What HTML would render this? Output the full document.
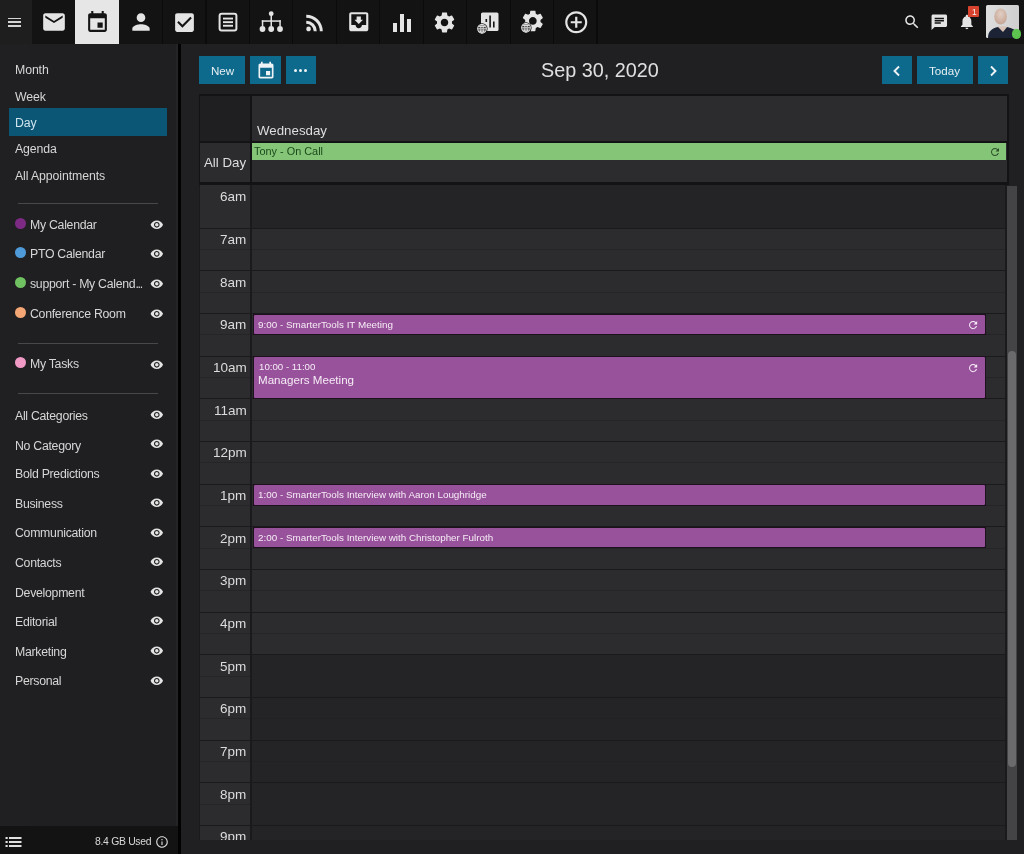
<!DOCTYPE html>
<html><head><meta charset="utf-8">
<style>
*{margin:0;padding:0;box-sizing:border-box;}
html,body{width:1024px;height:854px;overflow:hidden;background:#201f22;font-family:"Liberation Sans",sans-serif;color:#e2e2e2;position:relative;}
div{position:absolute;}
.t{white-space:nowrap;line-height:1;will-change:transform;}
.i{position:absolute;display:block;}
</style></head><body>

<div style="left:0;top:0;width:1024px;height:44px;background:#131313"></div>
<div style="left:0;top:0;width:32px;height:44px;background:#1e1e1f"></div>
<div style="left:8px;top:17.8px;width:13px;height:1.5px;background:#d4d4d4"></div>
<div style="left:8px;top:21.4px;width:13px;height:1.5px;background:#d4d4d4"></div>
<div style="left:8px;top:25.0px;width:13px;height:1.5px;background:#d4d4d4"></div>
<div style="left:75.05px;top:0;width:1.2px;height:44px;background:#0b0b0b"></div>
<div style="left:75.45px;top:0;width:43.45px;height:44px;background:#e6e6e6"></div>
<div style="left:161.95px;top:0;width:1.2px;height:44px;background:#0b0b0b"></div>
<div style="left:205.40px;top:0;width:1.2px;height:44px;background:#0b0b0b"></div>
<div style="left:248.85px;top:0;width:1.2px;height:44px;background:#0b0b0b"></div>
<div style="left:292.30px;top:0;width:1.2px;height:44px;background:#0b0b0b"></div>
<div style="left:335.75px;top:0;width:1.2px;height:44px;background:#0b0b0b"></div>
<div style="left:379.20px;top:0;width:1.2px;height:44px;background:#0b0b0b"></div>
<div style="left:422.65px;top:0;width:1.2px;height:44px;background:#0b0b0b"></div>
<div style="left:466.10px;top:0;width:1.2px;height:44px;background:#0b0b0b"></div>
<div style="left:509.55px;top:0;width:1.2px;height:44px;background:#0b0b0b"></div>
<div style="left:553.00px;top:0;width:1.2px;height:44px;background:#0b0b0b"></div>
<div style="left:596.45px;top:0;width:1.2px;height:44px;background:#0b0b0b"></div>
<svg class="i" style="left:40.73px;top:9.00px" width="26" height="26" viewBox="0 0 24 24"><path fill="#e4e4e4" d="M20 4H4c-1.1 0-1.99.9-1.99 2L2 18c0 1.1.9 2 2 2h16c1.1 0 2-.9 2-2V6c0-1.1-.9-2-2-2zm0 4l-8 5-8-5V6l8 5 8-5v2z"/></svg>
<svg class="i" style="left:84.68px;top:9.70px" width="25" height="25" viewBox="0 0 24 24"><path fill="#151515" d="M17 12h-5v5h5v-5zM16 1v2H8V1H6v2H5c-1.11 0-1.99.9-1.99 2L3 19c0 1.1.89 2 2 2h14c1.1 0 2-.9 2-2V5c0-1.1-.9-2-2-2h-1V1h-2zm3 18H5V8h14v11z"/></svg>
<svg class="i" style="left:127.62px;top:9.00px" width="26" height="26" viewBox="0 0 24 24"><path fill="#e4e4e4" d="M12 12c2.21 0 4-1.79 4-4s-1.79-4-4-4-4 1.79-4 4 1.79 4 4 4zm0 2c-2.67 0-8 1.34-8 4v2h16v-2c0-2.66-5.33-4-8-4z"/></svg>
<svg class="i" style="left:171.58px;top:9.70px" width="25" height="25" viewBox="0 0 24 24"><path fill="#e4e4e4" d="M19 3H5c-1.11 0-2 .9-2 2v14c0 1.1.89 2 2 2h14c1.11 0 2-.9 2-2V5c0-1.1-.89-2-2-2zm-9 14l-5-5 1.41-1.41L10 14.17l7.59-7.59L19 8l-9 9z"/></svg>
<svg class="i" style="left:215.53px;top:10px" width="24" height="24" viewBox="0 0 24 24"><rect x="3.6" y="3.7" width="16.8" height="16.8" rx="2" fill="none" stroke="#e4e4e4" stroke-width="2"/><rect x="7" y="7.6" width="10" height="1.9" fill="#e4e4e4"/><rect x="7" y="11.2" width="10" height="1.9" fill="#e4e4e4"/><rect x="7" y="14.8" width="10" height="1.9" fill="#e4e4e4"/></svg>
<svg class="i" style="left:0;top:0" width="300" height="44" viewBox="0 0 300 44" fill="#e4e4e4">
<circle cx="271.2" cy="13.7" r="2.4"/><rect x="270.5" y="14" width="1.5" height="7"/>
<rect x="261.8" y="20.3" width="19" height="1.5"/>
<rect x="261.8" y="20.3" width="1.5" height="6"/><rect x="270.5" y="20.3" width="1.5" height="6"/><rect x="279.3" y="20.3" width="1.5" height="6"/>
<circle cx="262.5" cy="29" r="2.9"/><circle cx="271.2" cy="29" r="2.9"/><circle cx="280" cy="29" r="2.9"/></svg>
<svg class="i" style="left:301.68px;top:9.55px" width="25.5" height="25.5" viewBox="0 0 24 24"><path fill="#e4e4e4" d="M6.18 15.64a2.18 2.18 0 0 1 2.18 2.18C8.36 19 7.38 20 6.18 20 5 20 4 19 4 17.82a2.18 2.18 0 0 1 2.18-2.18M4 4.44A15.56 15.56 0 0 1 19.56 20h-2.83A12.73 12.73 0 0 0 4 7.27V4.44m0 5.66a9.9 9.9 0 0 1 9.9 9.9h-2.83A7.07 7.07 0 0 0 4 12.93V10.1z"/></svg>
<svg class="i" style="left:345.93px;top:9.45px" width="25.5" height="25.5" viewBox="0 0 24 24"><path fill="#e4e4e4" d="M19 3H4.99c-1.11 0-1.98.89-1.98 2L3 19c0 1.1.88 2 1.99 2H19c1.1 0 2-.9 2-2V5c0-1.11-.9-2-2-2zm0 12h-4c0 1.66-1.35 3-3 3s-3-1.34-3-3H4.99V5H19v10zm-3-5h-2V7h-4v3H8l4 4 4-4z"/></svg>
<div style="left:393px;top:22.9px;width:3.9px;height:9.1px;background:#e4e4e4"></div>
<div style="left:399.8px;top:14.4px;width:4.1px;height:17.6px;background:#e4e4e4"></div>
<div style="left:407px;top:19.3px;width:3.9px;height:12.7px;background:#e4e4e4"></div>
<svg class="i" style="left:432.28px;top:9.90px" width="25" height="25" viewBox="0 0 24 24"><path fill="#e4e4e4" d="M19.14 12.94c.04-.3.06-.61.06-.94 0-.32-.02-.64-.07-.94l2.03-1.58c.18-.14.23-.41.12-.61l-1.92-3.32c-.12-.22-.37-.29-.59-.22l-2.39.96c-.5-.38-1.03-.7-1.62-.94l-.36-2.54c-.04-.24-.24-.41-.48-.41h-3.84c-.24 0-.43.17-.47.41l-.36 2.54c-.59.24-1.130.57-1.62.94l-2.39-.96c-.22-.08-.47 0-.59.22L2.74 8.87c-.12.21-.08.47.12.61l2.03 1.58c-.05.3-.09.63-.09.94s.02.64.07.94l-2.03 1.58c-.18.14-.23.41-.12.61l1.92 3.32c.12.22.37.29.59.22l2.39-.96c.5.38 1.03.7 1.62.94l.36 2.54c.05.24.24.41.48.41h3.84c.24 0 .44-.17.47-.41l.36-2.54c.59-.24 1.13-.56 1.62-.94l2.39.96c.22.08.47 0 .59-.22l1.92-3.32c.12-.22.07-.47-.12-.61l-2.01-1.58zM12 15.6c-1.98 0-3.6-1.62-3.6-3.6s1.62-3.6 3.6-3.6 3.6 1.62 3.6 3.6-1.62 3.6-3.6 3.6z"/></svg>
<svg class="i" style="left:476.23px;top:10.5px" width="24" height="24" viewBox="0 0 24 24">
<rect x="5" y="1.5" width="17.5" height="18.5" rx="1.5" fill="#e4e4e4"/>
<rect x="13.3" y="4.5" width="1.6" height="12" fill="#131313"/><rect x="17" y="10.5" width="1.6" height="6" fill="#131313"/><rect x="9.5" y="8" width="1.6" height="3" fill="#131313"/>
<circle cx="6" cy="17.8" r="5.6" fill="#131313"/><circle cx="6" cy="17.8" r="4.3" fill="none" stroke="#e4e4e4" stroke-width="1.1"/>
<path d="M1.7 17.8h8.6M6 13.5v8.6M2.6 15.5h6.8M2.6 20.1h6.8" stroke="#e4e4e4" stroke-width="0.9"/><ellipse cx="6" cy="17.8" rx="1.9" ry="4.3" fill="none" stroke="#e4e4e4" stroke-width="0.9"/>
</svg>
<svg class="i" style="left:519.67px;top:10.3px" width="24" height="24" viewBox="0 0 24 24">
<g transform="translate(0,-1.9) scale(1.07)"><path fill="#e4e4e4" d="M19.14 12.94c.04-.3.06-.61.06-.94 0-.32-.02-.64-.07-.94l2.03-1.58c.18-.14.23-.41.12-.61l-1.92-3.32c-.12-.22-.37-.29-.59-.22l-2.39.96c-.5-.38-1.03-.7-1.62-.94l-.36-2.54c-.04-.24-.24-.41-.48-.41h-3.84c-.24 0-.43.17-.47.41l-.36 2.54c-.59.24-1.130.57-1.62.94l-2.39-.96c-.22-.08-.47 0-.59.22L2.74 8.87c-.12.21-.08.47.12.61l2.03 1.58c-.05.3-.09.63-.09.94s.02.64.07.94l-2.03 1.58c-.18.14-.23.41-.12.61l1.92 3.32c.12.22.37.29.59.22l2.39-.96c.5.38 1.03.7 1.62.94l.36 2.54c.05.24.24.41.48.41h3.84c.24 0 .44-.17.47-.41l.36-2.54c.59-.24 1.13-.56 1.62-.94l2.39.96c.22.08.47 0 .59-.22l1.92-3.32c.12-.22.07-.47-.12-.61l-2.01-1.58zM12 15.6c-1.98 0-3.6-1.62-3.6-3.6s1.62-3.6 3.6-3.6 3.6 1.62 3.6 3.6-1.62 3.6-3.6 3.6z"/></g>
<circle cx="6" cy="17.8" r="5.6" fill="#131313"/><circle cx="6" cy="17.8" r="4.3" fill="none" stroke="#e4e4e4" stroke-width="1.1"/>
<path d="M1.7 17.8h8.6M6 13.5v8.6M2.6 15.5h6.8M2.6 20.1h6.8" stroke="#e4e4e4" stroke-width="0.9"/><ellipse cx="6" cy="17.8" rx="1.9" ry="4.3" fill="none" stroke="#e4e4e4" stroke-width="0.9"/>
</svg>
<svg class="i" style="left:562.58px;top:8.75px" width="26.5" height="26.5" viewBox="0 0 24 24"><path fill="#e4e4e4" d="M13 7h-2v4H7v2h4v4h2v-4h4v-2h-4V7zm-1-5C6.48 2 2 6.48 2 12s4.48 10 10 10 10-4.48 10-10S17.52 2 12 2zm0 18c-4.41 0-8-3.59-8-8s3.59-8 8-8 8 3.590 8 8-3.59 8-8 8z"/></svg>
<svg class="i" style="left:903.20px;top:13.40px" width="18" height="18" viewBox="0 0 24 24"><path fill="#e4e4e4" d="M15.5 14h-.79l-.28-.27C15.41 12.59 16 11.11 16 9.5 16 5.91 13.09 3 9.5 3S3 5.91 3 9.5 5.91 16 9.5 16c1.61 0 3.09-.59 4.23-1.57l.27.28v.79l5 4.99L20.49 19l-4.99-5zm-6 0C7.01 14 5 11.99 5 9.5S7.01 5 9.5 5 14 7.01 14 9.5 11.99 14 9.5 14z"/></svg>
<svg class="i" style="left:930.30px;top:12.50px" width="18.6" height="18.6" viewBox="0 0 24 24"><path fill="#e4e4e4" d="M20 2H4c-1.1 0-1.99.9-1.99 2L2 22l4-4h14c1.1 0 2-.9 2-2V4c0-1.1-.9-2-2-2zM6 9h12v2H6V9zm8 5H6v-2h8v2zm4-6H6V6h12v2z"/></svg>
<svg class="i" style="left:958.10px;top:13.30px" width="17.8" height="17.8" viewBox="0 0 24 24"><path fill="#e4e4e4" d="M12 22c1.1 0 2-.9 2-2h-4c0 1.1.89 2 2 2zm6-6v-5c0-3.07-1.64-5.64-4.5-6.32V4c0-.83-.67-1.5-1.5-1.5s-1.5.67-1.5 1.5v.68C7.63 5.36 6 7.920 6 11v5l-2 2v1h16v-1l-2-2z"/></svg>
<div style="left:968px;top:6px;width:11px;height:11px;background:#d8432e;border-radius:1px"></div>
<div class="t" style="left:971.60px;top:7.80px;font-size:8.5px;color:#f4f4f4;">1</div>
<svg class="i" style="left:986px;top:5px" width="33" height="33" viewBox="0 0 33 33">
<defs><linearGradient id="ag" x1="0" y1="0" x2="1" y2="0"><stop offset="0" stop-color="#dedede"/><stop offset="1" stop-color="#cfcfcf"/></linearGradient>
<radialGradient id="hg" cx="0.5" cy="0.35" r="0.6"><stop offset="0" stop-color="#e2cfc4"/><stop offset="1" stop-color="#c8a898"/></radialGradient></defs>
<rect x="0" y="0" width="33" height="33" rx="1.5" fill="url(#ag)"/>
<path d="M2 33 C2 26 6 23.5 12 22 L21 22 C27 23.5 32 26 33 30 L33 33 Z" fill="#1b2335"/>
<path d="M11.5 21.5 L21.5 21.5 L17 27 Z" fill="#d9c3b6"/>
<ellipse cx="14.6" cy="11.5" rx="6.3" ry="8" fill="url(#hg)"/>
</svg>
<div style="left:1011.7px;top:29.1px;width:9.8px;height:9.8px;background:#5dc44f;border-radius:50%"></div>
<div style="left:0;top:44px;width:178px;height:782px;background:#1f1e21"></div>
<div style="left:0;top:44px;width:30px;height:782px;background:#201f22"></div>
<div style="left:176px;top:44px;width:2px;height:782px;background:#242326"></div>
<div style="left:178px;top:44px;width:3px;height:810px;background:#020202"></div>
<div style="left:0;top:826px;width:178px;height:28px;background:#131313"></div>
<div style="left:9px;top:108px;width:157.5px;height:28px;background:#0c5675"></div>
<div class="t" style="left:14.60px;top:64.39px;font-size:12.3px;color:#d6d6d6;letter-spacing:-0.1px;">Month</div>
<div class="t" style="left:14.60px;top:90.79px;font-size:12.3px;color:#d6d6d6;letter-spacing:-0.1px;">Week</div>
<div class="t" style="left:14.60px;top:117.19px;font-size:12.3px;color:#cfe4ee;letter-spacing:-0.1px;">Day</div>
<div class="t" style="left:14.60px;top:143.39px;font-size:12.3px;color:#d6d6d6;letter-spacing:-0.1px;">Agenda</div>
<div class="t" style="left:14.60px;top:170.09px;font-size:12.3px;color:#d6d6d6;letter-spacing:-0.1px;">All Appointments</div>
<div style="left:18px;top:203px;width:140px;height:1px;background:#48484a"></div>
<div style="left:18px;top:343.2px;width:140px;height:1px;background:#48484a"></div>
<div style="left:18px;top:393.4px;width:140px;height:1px;background:#48484a"></div>
<div style="left:15px;top:217.50px;width:11px;height:11px;border-radius:50%;background:#7d2a84"></div>
<div class="t" style="left:30.10px;top:218.59px;font-size:12.3px;color:#d6d6d6;letter-spacing:-0.28px;">My Calendar</div>
<svg class="i" style="left:150.20px;top:218.00px" width="13.6" height="13.6" viewBox="0 0 24 24"><path fill="#e4e4e4" d="M12 4.5C7 4.5 2.73 7.61 1 12c1.73 4.39 6 7.5 11 7.5s9.27-3.11 11-7.5c-1.73-4.39-6-7.5-11-7.5zM12 17c-2.76 0-5-2.24-5-5s2.24-5 5-5 5 2.24 5 5-2.24 5-5 5zm0-8c-1.66 0-3 1.34-3 3s1.34 3 3 3 3-1.34 3-3-1.34-3-3-3z"/></svg>
<div style="left:15px;top:246.90px;width:11px;height:11px;border-radius:50%;background:#4f9ad8"></div>
<div class="t" style="left:30.10px;top:248.09px;font-size:12.3px;color:#d6d6d6;letter-spacing:-0.28px;">PTO Calendar</div>
<svg class="i" style="left:150.20px;top:247.40px" width="13.6" height="13.6" viewBox="0 0 24 24"><path fill="#e4e4e4" d="M12 4.5C7 4.5 2.73 7.61 1 12c1.73 4.39 6 7.5 11 7.5s9.27-3.11 11-7.5c-1.73-4.39-6-7.5-11-7.5zM12 17c-2.76 0-5-2.24-5-5s2.24-5 5-5 5 2.24 5 5-2.24 5-5 5zm0-8c-1.66 0-3 1.34-3 3s1.34 3 3 3 3-1.34 3-3-1.34-3-3-3z"/></svg>
<div style="left:15px;top:276.80px;width:11px;height:11px;border-radius:50%;background:#6fc161"></div>
<div class="t" style="left:30.10px;top:277.79px;font-size:12.3px;color:#d6d6d6;letter-spacing:-0.28px;">support - My Calend<span style="letter-spacing:-1.2px">...</span></div>
<svg class="i" style="left:150.20px;top:277.30px" width="13.6" height="13.6" viewBox="0 0 24 24"><path fill="#e4e4e4" d="M12 4.5C7 4.5 2.73 7.61 1 12c1.73 4.39 6 7.5 11 7.5s9.27-3.11 11-7.5c-1.73-4.39-6-7.5-11-7.5zM12 17c-2.76 0-5-2.24-5-5s2.24-5 5-5 5 2.24 5 5-2.24 5-5 5zm0-8c-1.66 0-3 1.34-3 3s1.34 3 3 3 3-1.34 3-3-1.34-3-3-3z"/></svg>
<div style="left:15px;top:306.70px;width:11px;height:11px;border-radius:50%;background:#f4a774"></div>
<div class="t" style="left:30.10px;top:307.99px;font-size:12.3px;color:#d6d6d6;letter-spacing:-0.28px;">Conference Room</div>
<svg class="i" style="left:150.20px;top:307.20px" width="13.6" height="13.6" viewBox="0 0 24 24"><path fill="#e4e4e4" d="M12 4.5C7 4.5 2.73 7.61 1 12c1.73 4.39 6 7.5 11 7.5s9.27-3.11 11-7.5c-1.73-4.39-6-7.5-11-7.5zM12 17c-2.76 0-5-2.24-5-5s2.24-5 5-5 5 2.24 5 5-2.24 5-5 5zm0-8c-1.66 0-3 1.34-3 3s1.34 3 3 3 3-1.34 3-3-1.34-3-3-3z"/></svg>
<div style="left:15px;top:357.00px;width:11px;height:11px;border-radius:50%;background:#f19ac6"></div>
<div class="t" style="left:30.10px;top:358.19px;font-size:12.3px;color:#d6d6d6;letter-spacing:-0.28px;">My Tasks</div>
<svg class="i" style="left:150.20px;top:357.50px" width="13.6" height="13.6" viewBox="0 0 24 24"><path fill="#e4e4e4" d="M12 4.5C7 4.5 2.73 7.61 1 12c1.73 4.39 6 7.5 11 7.5s9.27-3.11 11-7.5c-1.73-4.39-6-7.5-11-7.5zM12 17c-2.76 0-5-2.24-5-5s2.24-5 5-5 5 2.24 5 5-2.24 5-5 5zm0-8c-1.66 0-3 1.34-3 3s1.34 3 3 3 3-1.34 3-3-1.34-3-3-3z"/></svg>
<div class="t" style="left:14.60px;top:409.89px;font-size:12.3px;color:#d6d6d6;letter-spacing:-0.28px;">All Categories</div>
<svg class="i" style="left:150.20px;top:407.90px" width="13.6" height="13.6" viewBox="0 0 24 24"><path fill="#e4e4e4" d="M12 4.5C7 4.5 2.73 7.61 1 12c1.73 4.39 6 7.5 11 7.5s9.27-3.11 11-7.5c-1.73-4.39-6-7.5-11-7.5zM12 17c-2.76 0-5-2.24-5-5s2.24-5 5-5 5 2.24 5 5-2.24 5-5 5zm0-8c-1.66 0-3 1.34-3 3s1.34 3 3 3 3-1.34 3-3-1.34-3-3-3z"/></svg>
<div class="t" style="left:14.60px;top:439.79px;font-size:12.3px;color:#d6d6d6;letter-spacing:-0.28px;">No Category</div>
<svg class="i" style="left:150.20px;top:437.10px" width="13.6" height="13.6" viewBox="0 0 24 24"><path fill="#e4e4e4" d="M12 4.5C7 4.5 2.73 7.61 1 12c1.73 4.39 6 7.5 11 7.5s9.27-3.11 11-7.5c-1.73-4.39-6-7.5-11-7.5zM12 17c-2.76 0-5-2.24-5-5s2.24-5 5-5 5 2.24 5 5-2.24 5-5 5zm0-8c-1.66 0-3 1.34-3 3s1.34 3 3 3 3-1.34 3-3-1.34-3-3-3z"/></svg>
<div class="t" style="left:14.60px;top:467.89px;font-size:12.3px;color:#d6d6d6;letter-spacing:-0.28px;">Bold Predictions</div>
<svg class="i" style="left:150.20px;top:466.90px" width="13.6" height="13.6" viewBox="0 0 24 24"><path fill="#e4e4e4" d="M12 4.5C7 4.5 2.73 7.61 1 12c1.73 4.39 6 7.5 11 7.5s9.27-3.11 11-7.5c-1.73-4.39-6-7.5-11-7.5zM12 17c-2.76 0-5-2.24-5-5s2.24-5 5-5 5 2.24 5 5-2.24 5-5 5zm0-8c-1.66 0-3 1.34-3 3s1.34 3 3 3 3-1.34 3-3-1.34-3-3-3z"/></svg>
<div class="t" style="left:14.60px;top:497.79px;font-size:12.3px;color:#d6d6d6;letter-spacing:-0.28px;">Business</div>
<svg class="i" style="left:150.20px;top:496.30px" width="13.6" height="13.6" viewBox="0 0 24 24"><path fill="#e4e4e4" d="M12 4.5C7 4.5 2.73 7.61 1 12c1.73 4.39 6 7.5 11 7.5s9.27-3.11 11-7.5c-1.73-4.39-6-7.5-11-7.5zM12 17c-2.76 0-5-2.24-5-5s2.24-5 5-5 5 2.24 5 5-2.24 5-5 5zm0-8c-1.66 0-3 1.34-3 3s1.34 3 3 3 3-1.34 3-3-1.34-3-3-3z"/></svg>
<div class="t" style="left:14.60px;top:527.29px;font-size:12.3px;color:#d6d6d6;letter-spacing:-0.28px;">Communication</div>
<svg class="i" style="left:150.20px;top:525.70px" width="13.6" height="13.6" viewBox="0 0 24 24"><path fill="#e4e4e4" d="M12 4.5C7 4.5 2.73 7.61 1 12c1.73 4.39 6 7.5 11 7.5s9.27-3.11 11-7.5c-1.73-4.39-6-7.5-11-7.5zM12 17c-2.76 0-5-2.24-5-5s2.24-5 5-5 5 2.24 5 5-2.24 5-5 5zm0-8c-1.66 0-3 1.34-3 3s1.34 3 3 3 3-1.34 3-3-1.34-3-3-3z"/></svg>
<div class="t" style="left:14.60px;top:557.09px;font-size:12.3px;color:#d6d6d6;letter-spacing:-0.28px;">Contacts</div>
<svg class="i" style="left:150.20px;top:555.40px" width="13.6" height="13.6" viewBox="0 0 24 24"><path fill="#e4e4e4" d="M12 4.5C7 4.5 2.73 7.61 1 12c1.73 4.39 6 7.5 11 7.5s9.27-3.11 11-7.5c-1.73-4.39-6-7.5-11-7.5zM12 17c-2.76 0-5-2.24-5-5s2.24-5 5-5 5 2.24 5 5-2.24 5-5 5zm0-8c-1.66 0-3 1.34-3 3s1.34 3 3 3 3-1.34 3-3-1.34-3-3-3z"/></svg>
<div class="t" style="left:14.60px;top:586.99px;font-size:12.3px;color:#d6d6d6;letter-spacing:-0.28px;">Development</div>
<svg class="i" style="left:150.20px;top:585.40px" width="13.6" height="13.6" viewBox="0 0 24 24"><path fill="#e4e4e4" d="M12 4.5C7 4.5 2.73 7.61 1 12c1.73 4.39 6 7.5 11 7.5s9.27-3.11 11-7.5c-1.73-4.39-6-7.5-11-7.5zM12 17c-2.76 0-5-2.24-5-5s2.24-5 5-5 5 2.24 5 5-2.24 5-5 5zm0-8c-1.66 0-3 1.34-3 3s1.34 3 3 3 3-1.34 3-3-1.34-3-3-3z"/></svg>
<div class="t" style="left:14.60px;top:615.99px;font-size:12.3px;color:#d6d6d6;letter-spacing:-0.28px;">Editorial</div>
<svg class="i" style="left:150.20px;top:614.40px" width="13.6" height="13.6" viewBox="0 0 24 24"><path fill="#e4e4e4" d="M12 4.5C7 4.5 2.73 7.61 1 12c1.73 4.39 6 7.5 11 7.5s9.27-3.11 11-7.5c-1.73-4.39-6-7.5-11-7.5zM12 17c-2.76 0-5-2.24-5-5s2.24-5 5-5 5 2.24 5 5-2.24 5-5 5zm0-8c-1.66 0-3 1.34-3 3s1.34 3 3 3 3-1.34 3-3-1.34-3-3-3z"/></svg>
<div class="t" style="left:14.60px;top:645.59px;font-size:12.3px;color:#d6d6d6;letter-spacing:-0.28px;">Marketing</div>
<svg class="i" style="left:150.20px;top:644.40px" width="13.6" height="13.6" viewBox="0 0 24 24"><path fill="#e4e4e4" d="M12 4.5C7 4.5 2.73 7.61 1 12c1.73 4.39 6 7.5 11 7.5s9.27-3.11 11-7.5c-1.73-4.39-6-7.5-11-7.5zM12 17c-2.76 0-5-2.24-5-5s2.24-5 5-5 5 2.24 5 5-2.24 5-5 5zm0-8c-1.66 0-3 1.34-3 3s1.34 3 3 3 3-1.34 3-3-1.34-3-3-3z"/></svg>
<div class="t" style="left:14.60px;top:674.99px;font-size:12.3px;color:#d6d6d6;letter-spacing:-0.28px;">Personal</div>
<svg class="i" style="left:150.20px;top:673.90px" width="13.6" height="13.6" viewBox="0 0 24 24"><path fill="#e4e4e4" d="M12 4.5C7 4.5 2.73 7.61 1 12c1.73 4.39 6 7.5 11 7.5s9.27-3.11 11-7.5c-1.73-4.39-6-7.5-11-7.5zM12 17c-2.76 0-5-2.24-5-5s2.24-5 5-5 5 2.24 5 5-2.24 5-5 5zm0-8c-1.66 0-3 1.34-3 3s1.34 3 3 3 3-1.34 3-3-1.34-3-3-3z"/></svg>
<svg class="i" style="left:4.5px;top:836px" width="17" height="12" viewBox="0 0 17 12" fill="#e0e0e0">
<rect x="0.5" y="1" width="2.2" height="2"/><rect x="4" y="1" width="12.5" height="2"/>
<rect x="0.5" y="5" width="2.2" height="2"/><rect x="4" y="5" width="12.5" height="2"/>
<rect x="0.5" y="9" width="2.2" height="2"/><rect x="4" y="9" width="12.5" height="2"/></svg>
<div class="t" style="left:94.60px;top:836.90px;font-size:10.4px;color:#d8d8d8;letter-spacing:-0.3px;">8.4 GB Used</div>
<svg class="i" style="left:154.50px;top:835.00px" width="14" height="14" viewBox="0 0 24 24"><path fill="#d8d8d8" d="M11 7h2v2h-2zm0 4h2v6h-2zm1-9C6.48 2 2 6.48 2 12s4.48 10 10 10 10-4.48 10-10S17.52 2 12 2zm0 18c-4.41 0-8-3.59-8-8s3.59-8 8-8 8 3.59 8 8-3.59 8-8 8z"/></svg>
<div style="left:199px;top:56px;width:46px;height:27.5px;background:#0e6a8d"></div>
<div class="t" style="left:210.60px;top:64.98px;font-size:11.6px;color:#e6eef2;">New</div>
<div style="left:250px;top:56px;width:31px;height:27.5px;background:#0e6a8d"></div>
<svg class="i" style="left:255.5px;top:61px" width="20" height="20" viewBox="0 0 24 24"><path fill="#eef3f5" d="M17 12h-5v5h5v-5zM16 1v2H8V1H6v2H5c-1.11 0-1.99.9-1.99 2L3 19c0 1.1.89 2 2 2h14c1.1 0 2-.9 2-2V5c0-1.1-.9-2-2-2h-1V1h-2zm3 18H5V8h14v11z"/></svg>
<div style="left:286px;top:56px;width:30px;height:27.5px;background:#0e6a8d"></div>
<div style="left:293.70px;top:68.8px;width:3.2px;height:3.2px;border-radius:50%;background:#eef3f5"></div>
<div style="left:298.90px;top:68.8px;width:3.2px;height:3.2px;border-radius:50%;background:#eef3f5"></div>
<div style="left:304.10px;top:68.8px;width:3.2px;height:3.2px;border-radius:50%;background:#eef3f5"></div>
<div class="t" style="left:540.50px;top:60.74px;font-size:19.8px;color:#e0e0e0;">Sep 30, 2020</div>
<div style="left:882px;top:56px;width:30px;height:27.5px;background:#0e6a8d"></div>
<div style="left:917px;top:56px;width:56px;height:27.5px;background:#0e6a8d"></div>
<div style="left:978px;top:56px;width:30px;height:27.5px;background:#0e6a8d"></div>
<div class="t" style="left:929.00px;top:64.98px;font-size:11.6px;color:#e6eef2;">Today</div>
<svg class="i" style="left:891.3px;top:64.6px" width="12" height="12" viewBox="0 0 12 12"><path d="M8 1.5L3.5 6 8 10.5" fill="none" stroke="#eef3f5" stroke-width="1.9"/></svg>
<svg class="i" style="left:987.3px;top:64.6px" width="12" height="12" viewBox="0 0 12 12"><path d="M4 1.5L8.5 6 4 10.5" fill="none" stroke="#eef3f5" stroke-width="1.9"/></svg>
<div style="left:199px;top:94px;width:809.5px;height:91px;background:#131215"></div>
<div style="left:200px;top:96px;width:50px;height:45px;background:#1f1e21"></div>
<div style="left:252px;top:96px;width:754.5px;height:45px;background:#2c2b2e"></div>
<div class="t" style="left:257.30px;top:124.34px;font-size:13.3px;color:#dedede;">Wednesday</div>
<div style="left:200px;top:143px;width:50px;height:39px;background:#2c2b2e"></div>
<div style="left:252px;top:143px;width:754.5px;height:39px;background:#2c2b2e"></div>
<div class="t" style="right:777.50px;top:155.94px;font-size:13.3px;color:#dedede;">All Day</div>
<div style="left:252px;top:143px;width:754px;height:16.5px;background:#85c578"></div>
<div class="t" style="left:253.50px;top:145.97px;font-size:10.9px;color:#1d4a1a;">Tony - On Call</div>
<svg class="i" style="left:989.30px;top:145.70px" width="12" height="12" viewBox="0 0 24 24"><path fill="#2d4f2a" d="M17.65 6.35C16.2 4.9 14.21 4 12 4c-4.42 0-7.99 3.58-7.99 8s3.57 8 7.99 8c3.73 0 6.84-2.55 7.73-6h-2.08c-.82 2.33-3.04 4-5.65 4-3.31 0-6-2.69-6-6s2.69-6 6-6c1.66 0 3.14.69 4.22 1.78L13 11h7V4l-2.35 2.35z"/></svg>
<div style="left:199px;top:185px;width:808px;height:655px;background:#1a191c;overflow:hidden">
<div style="left:1px;top:0px;width:50px;height:43px;background:#2c2b2e"></div>
<div style="left:53px;top:0px;width:753px;height:43px;background:#242326"></div>
<div style="left:1px;top:44px;width:50px;height:41px;background:#2c2b2e"></div>
<div style="left:53px;top:44px;width:753px;height:41px;background:#2c2b2e"></div>
<div style="left:1px;top:64px;width:50px;height:1px;background:#252427"></div>
<div style="left:53px;top:64px;width:753px;height:1px;background:#252427"></div>
<div style="left:1px;top:86px;width:50px;height:42px;background:#2c2b2e"></div>
<div style="left:53px;top:86px;width:753px;height:42px;background:#2c2b2e"></div>
<div style="left:1px;top:107px;width:50px;height:1px;background:#252427"></div>
<div style="left:53px;top:107px;width:753px;height:1px;background:#252427"></div>
<div style="left:1px;top:129px;width:50px;height:42px;background:#2c2b2e"></div>
<div style="left:53px;top:129px;width:753px;height:42px;background:#2c2b2e"></div>
<div style="left:1px;top:149px;width:50px;height:1px;background:#252427"></div>
<div style="left:53px;top:149px;width:753px;height:1px;background:#252427"></div>
<div style="left:1px;top:172px;width:50px;height:41px;background:#2c2b2e"></div>
<div style="left:53px;top:172px;width:753px;height:41px;background:#2c2b2e"></div>
<div style="left:1px;top:192px;width:50px;height:1px;background:#252427"></div>
<div style="left:53px;top:192px;width:753px;height:1px;background:#252427"></div>
<div style="left:1px;top:214px;width:50px;height:42px;background:#2c2b2e"></div>
<div style="left:53px;top:214px;width:753px;height:42px;background:#2c2b2e"></div>
<div style="left:1px;top:235px;width:50px;height:1px;background:#252427"></div>
<div style="left:53px;top:235px;width:753px;height:1px;background:#252427"></div>
<div style="left:1px;top:257px;width:50px;height:42px;background:#2c2b2e"></div>
<div style="left:53px;top:257px;width:753px;height:42px;background:#2c2b2e"></div>
<div style="left:1px;top:277px;width:50px;height:1px;background:#252427"></div>
<div style="left:53px;top:277px;width:753px;height:1px;background:#252427"></div>
<div style="left:1px;top:300px;width:50px;height:41px;background:#2c2b2e"></div>
<div style="left:53px;top:300px;width:753px;height:41px;background:#2c2b2e"></div>
<div style="left:1px;top:320px;width:50px;height:1px;background:#252427"></div>
<div style="left:53px;top:320px;width:753px;height:1px;background:#252427"></div>
<div style="left:1px;top:342px;width:50px;height:42px;background:#2c2b2e"></div>
<div style="left:53px;top:342px;width:753px;height:42px;background:#2c2b2e"></div>
<div style="left:1px;top:363px;width:50px;height:1px;background:#252427"></div>
<div style="left:53px;top:363px;width:753px;height:1px;background:#252427"></div>
<div style="left:1px;top:385px;width:50px;height:42px;background:#2c2b2e"></div>
<div style="left:53px;top:385px;width:753px;height:42px;background:#2c2b2e"></div>
<div style="left:1px;top:405px;width:50px;height:1px;background:#252427"></div>
<div style="left:53px;top:405px;width:753px;height:1px;background:#252427"></div>
<div style="left:1px;top:428px;width:50px;height:41px;background:#2c2b2e"></div>
<div style="left:53px;top:428px;width:753px;height:41px;background:#2c2b2e"></div>
<div style="left:1px;top:448px;width:50px;height:1px;background:#252427"></div>
<div style="left:53px;top:448px;width:753px;height:1px;background:#252427"></div>
<div style="left:1px;top:470px;width:50px;height:42px;background:#2c2b2e"></div>
<div style="left:53px;top:470px;width:753px;height:42px;background:#242326"></div>
<div style="left:1px;top:491px;width:50px;height:1px;background:#252427"></div>
<div style="left:1px;top:513px;width:50px;height:42px;background:#2c2b2e"></div>
<div style="left:53px;top:513px;width:753px;height:42px;background:#242326"></div>
<div style="left:1px;top:533px;width:50px;height:1px;background:#252427"></div>
<div style="left:53px;top:533px;width:753px;height:1px;background:#222124"></div>
<div style="left:1px;top:556px;width:50px;height:41px;background:#2c2b2e"></div>
<div style="left:53px;top:556px;width:753px;height:41px;background:#242326"></div>
<div style="left:1px;top:576px;width:50px;height:1px;background:#252427"></div>
<div style="left:53px;top:576px;width:753px;height:1px;background:#222124"></div>
<div style="left:1px;top:598px;width:50px;height:42px;background:#2c2b2e"></div>
<div style="left:53px;top:598px;width:753px;height:42px;background:#242326"></div>
<div style="left:1px;top:619px;width:50px;height:1px;background:#252427"></div>
<div style="left:1px;top:641px;width:50px;height:42px;background:#2c2b2e"></div>
<div style="left:53px;top:641px;width:753px;height:42px;background:#242326"></div>
<div style="left:1px;top:661px;width:50px;height:1px;background:#252427"></div>
<div style="left:53px;top:661px;width:753px;height:1px;background:#222124"></div>
</div>
<div class="t" style="right:777.70px;top:190.37px;font-size:13.5px;color:#dcdcdc;">6am</div>
<div class="t" style="right:777.70px;top:233.04px;font-size:13.5px;color:#dcdcdc;">7am</div>
<div class="t" style="right:777.70px;top:275.71px;font-size:13.5px;color:#dcdcdc;">8am</div>
<div class="t" style="right:777.70px;top:318.37px;font-size:13.5px;color:#dcdcdc;">9am</div>
<div class="t" style="right:777.70px;top:361.04px;font-size:13.5px;color:#dcdcdc;">10am</div>
<div class="t" style="right:777.70px;top:403.71px;font-size:13.5px;color:#dcdcdc;">11am</div>
<div class="t" style="right:777.70px;top:446.37px;font-size:13.5px;color:#dcdcdc;">12pm</div>
<div class="t" style="right:777.70px;top:489.04px;font-size:13.5px;color:#dcdcdc;">1pm</div>
<div class="t" style="right:777.70px;top:531.71px;font-size:13.5px;color:#dcdcdc;">2pm</div>
<div class="t" style="right:777.70px;top:574.38px;font-size:13.5px;color:#dcdcdc;">3pm</div>
<div class="t" style="right:777.70px;top:617.04px;font-size:13.5px;color:#dcdcdc;">4pm</div>
<div class="t" style="right:777.70px;top:659.71px;font-size:13.5px;color:#dcdcdc;">5pm</div>
<div class="t" style="right:777.70px;top:702.38px;font-size:13.5px;color:#dcdcdc;">6pm</div>
<div class="t" style="right:777.70px;top:745.04px;font-size:13.5px;color:#dcdcdc;">7pm</div>
<div class="t" style="right:777.70px;top:787.71px;font-size:13.5px;color:#dcdcdc;">8pm</div>
<div class="t" style="right:777.70px;top:830.38px;font-size:13.5px;color:#dcdcdc;">9pm</div>
<div style="left:181px;top:840px;width:843px;height:14px;background:#201f22"></div>
<div style="left:1006.8px;top:186px;width:10.4px;height:654px;background:#444446"></div>
<div style="left:1008px;top:350.5px;width:8px;height:416px;background:#6a6a6c;border-radius:4px"></div>
<div style="left:253px;top:313.60px;width:733.2px;height:21.80px;background:#1c111c"></div><div style="left:254px;top:314.8px;width:731px;height:19.6px;background:#98529b;border-radius:1px"></div>
<div class="t" style="left:257.60px;top:319.86px;font-size:9.85px;color:#f6ecf6;">9:00 - SmarterTools IT Meeting</div>
<svg class="i" style="left:966.70px;top:319.00px" width="12.2" height="12.2" viewBox="0 0 24 24"><path fill="#f6ecf6" d="M17.65 6.35C16.2 4.9 14.21 4 12 4c-4.42 0-7.99 3.58-7.99 8s3.57 8 7.99 8c3.73 0 6.84-2.55 7.73-6h-2.08c-.82 2.33-3.04 4-5.65 4-3.31 0-6-2.69-6-6s2.69-6 6-6c1.66 0 3.14.69 4.22 1.78L13 11h7V4l-2.35 2.35z"/></svg>
<div style="left:253px;top:356.10px;width:733.2px;height:42.90px;background:#1c111c"></div><div style="left:254px;top:357.3px;width:731px;height:40.7px;background:#98529b;border-radius:1px"></div>
<div class="t" style="left:258.50px;top:361.99px;font-size:9.7px;color:#f6ecf6;">10:00 - 11:00</div>
<div class="t" style="left:257.90px;top:374.28px;font-size:11.6px;color:#f6ecf6;">Managers Meeting</div>
<svg class="i" style="left:966.70px;top:361.50px" width="12.2" height="12.2" viewBox="0 0 24 24"><path fill="#f6ecf6" d="M17.65 6.35C16.2 4.9 14.21 4 12 4c-4.42 0-7.99 3.58-7.99 8s3.57 8 7.99 8c3.73 0 6.84-2.55 7.73-6h-2.08c-.82 2.33-3.04 4-5.65 4-3.31 0-6-2.69-6-6s2.69-6 6-6c1.66 0 3.14.69 4.22 1.78L13 11h7V4l-2.35 2.35z"/></svg>
<div style="left:253px;top:484.00px;width:733.2px;height:21.70px;background:#1c111c"></div><div style="left:254px;top:485.2px;width:731px;height:19.5px;background:#98529b;border-radius:1px"></div>
<div class="t" style="left:257.80px;top:490.26px;font-size:9.85px;color:#f6ecf6;">1:00 - SmarterTools Interview with Aaron Loughridge</div>
<div style="left:253px;top:526.60px;width:733.2px;height:21.80px;background:#1c111c"></div><div style="left:254px;top:527.8px;width:731px;height:19.6px;background:#98529b;border-radius:1px"></div>
<div class="t" style="left:257.80px;top:532.96px;font-size:9.85px;color:#f6ecf6;">2:00 - SmarterTools Interview with Christopher Fulroth</div>
</body></html>
